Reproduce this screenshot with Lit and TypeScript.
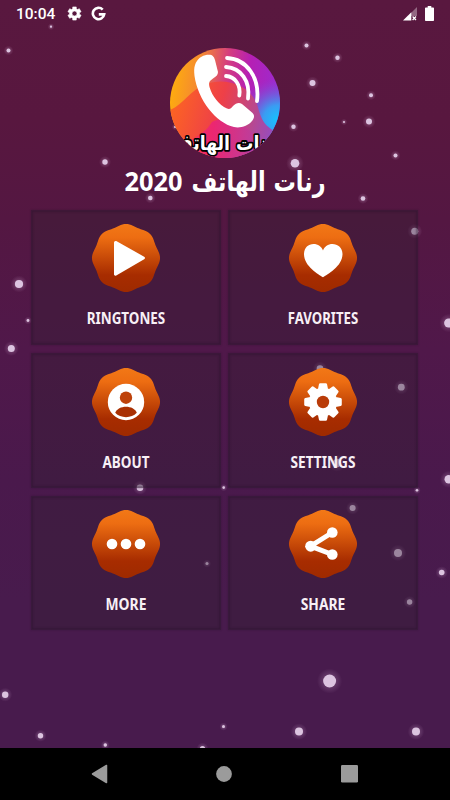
import { LitElement, html, svg, css, type SVGTemplateResult } from "lit";
import { customElement } from "lit/decorators.js";

const LIGHTS: [number, number, number][] = [
  [8.5, 50.5, 2], [51, 26.7, 1.1], [306.5, 45.5, 2], [337.5, 57.7, 2.2], [312.5, 83, 3],
  [371, 95.3, 2], [344, 122, 1], [369, 121.6, 3], [293.5, 126.7, 2.2], [295, 163.3, 4.3],
  [395.5, 155.5, 2], [363, 198.5, 2.3], [175, 127, 1], [150.3, 198, 2.3], [105, 162, 2.7],
  [19, 284, 4.1], [28, 320.5, 1.4], [11.3, 348.5, 3.5], [414.7, 231.3, 3.5], [448.7, 323, 4.6],
  [140, 487.7, 3.3], [223.7, 487.6, 1.3], [320, 368.5, 3.3], [401.3, 387.2, 3.4], [448.7, 479.3, 4.2],
  [417, 490.3, 1.3], [337, 463, 4.2], [207, 563.6, 1.5], [352.6, 508, 3], [398, 552.9, 4],
  [441.7, 572.5, 2.8], [409.6, 602, 2.7], [5.2, 694.7, 3.2], [40.5, 735.7, 2.7], [105.3, 745, 1.7],
  [223.5, 726.6, 1.5], [329.6, 681, 6.5], [299, 731.6, 4], [416, 731.6, 4], [202.5, 748.5, 2.6],
];

/** Soft eight-cornered badge outline centred on the origin. */
const BADGE = (() => {
  const pts: string[] = [];
  for (let d = 0; d < 360; d += 3) {
    const a = (d * Math.PI) / 180;
    const r = 33.1 + 0.95 * Math.cos(8 * a);
    pts.push(`${(r * Math.cos(a)).toFixed(2)} ${(r * Math.sin(a)).toFixed(2)}`);
  }
  return `M${pts.join("L")}Z`;
})();

/** Toothed wheel centred on the origin. */
function gear(outer: number, root: number, teeth: number, tip: number, base: number): string {
  const pts: string[] = [];
  const at = (r: number, deg: number) => {
    const a = ((deg - 90) * Math.PI) / 180;
    pts.push(`${(r * Math.cos(a)).toFixed(2)} ${(r * Math.sin(a)).toFixed(2)}`);
  };
  for (let i = 0; i < teeth; i++) {
    const c = (i * 360) / teeth;
    at(root, c - base);
    at(outer, c - tip);
    at(outer, c + tip);
    at(root, c + base);
  }
  return `M${pts.join("L")}Z`;
}

interface Tile {
  label: string;
  width: number;
  glyph: SVGTemplateResult;
}

const TILES: Tile[] = [
  {
    label: "RINGTONES", width: 78.5,
    glyph: svg`<path d="M-10.500 -15.600L17.400 0L-10.500 16.200Z" fill="#fff" stroke="#fff" stroke-width="3" stroke-linejoin="round"/>`,
  },
  {
    label: "FAVORITES", width: 70.5,
    glyph: svg`<path d="M0 19.200C-4 16.500 -19 8.500 -19 -4C-19 -10.500 -14.500 -14 -9.500 -14C-5 -14 -1.500 -11.500 0 -7.500C1.500 -11.500 5 -14 9.500 -14C14.500 -14 19.500 -10.500 19.500 -4C19.500 8.500 4 16.500 0 19.200Z" fill="#fff"/>`,
  },
  {
    label: "ABOUT", width: 47,
    glyph: svg`<circle r="18.200" fill="#fff"/><circle cy="-4.300" r="6.200" fill="#be420b"/><path d="M-10.800 10.800C-8 2.600 8 2.600 10.800 10.800C5.500 16.600 -5.500 16.600 -10.800 10.800Z" fill="#a93003"/>`,
  },
  {
    label: "SETTINGS", width: 65,
    glyph: svg`<path d="${gear(17.7, 13, 8, 9, 17)}" fill="#fff" stroke="#fff" stroke-width="2.600" stroke-linejoin="round"/><circle r="6.200" fill="#b93c09"/>`,
  },
  {
    label: "MORE", width: 41,
    glyph: svg`<g fill="#fff"><circle cx="-14" r="5.300"/><circle r="5.300"/><circle cx="14" r="5.300"/></g>`,
  },
  {
    label: "SHARE", width: 44.5,
    glyph: svg`<path d="M9.300 -11.500L-12.500 2.200L9.300 10.500" fill="none" stroke="#fff" stroke-width="5"/><g fill="#fff"><circle cx="9.300" cy="-11.500" r="5.300"/><circle cx="-12.300" cy="2.200" r="5.500"/><circle cx="9.300" cy="10.500" r="5.300"/></g>`,
  },
];

@customElement("status-bar")
export class StatusBar extends LitElement {
  static styles = css`
    :host { display: flex; align-items: center; height: 27px; padding: 0 16px; color: #fff; }
    .clock { font: 500 15.500px/27px Roboto, sans-serif; width: 50.500px; padding-top: 1px; }
    .gear { margin-right: 9px; }
    .gap { flex: 1; }
    .signal { margin-right: 8px; }
    svg { display: block; }
  `;
  render() {
    return html`
      <span class="clock">10:04</span>
      <svg class="gear" width="15" height="15" viewBox="-7.5 -7.5 15 15">
        <path fill="#fff" fill-rule="evenodd" stroke="#fff" stroke-width=".6" stroke-linejoin="round"
          d="${gear(6.8, 5, 6, 15, 21)}M2.500 0A2.500 2.500 0 1 0 -2.500 0A2.500 2.500 0 1 0 2.500 0Z"/>
      </svg>
      <svg width="15" height="15" viewBox="-7.5 -7.5 15 15">
        <path d="M4.200 -3.900A5.700 5.700 0 1 0 5.700 .9H.3" fill="none" stroke="#fff" stroke-width="2.600"/>
      </svg>
      <span class="gap"></span>
      <svg class="signal" width="14" height="14" viewBox="0 0 14 14">
        <path d="M14 0V9H8V6Z" fill="#fff" opacity=".35"/>
        <path d="M0 13.500L8.300 5.200V13.500Z" fill="#fff"/>
        <path d="M9.600 9.500L13 13M13 9.500L9.600 13" stroke="#fff" stroke-width="1.300"/>
      </svg>
      <svg width="9" height="15" viewBox="0 0 9 15">
        <path d="M2.700 0H6.300V1.500H8.200Q9 1.500 9 2.300V14.200Q9 15 8.200 15H.8Q0 15 0 14.200V2.300Q0 1.500 .8 1.500H2.700Z" fill="#fff"/>
      </svg>
    `;
  }
}

@customElement("app-logo")
export class AppLogo extends LitElement {
  static styles = css`
    :host { display: block; width: 110px; height: 110px; border-radius: 50%; overflow: hidden; }
    svg { display: block; }
    .name { font: 700 20px "DejaVu Sans", sans-serif; }
  `;
  render() {
    return html`
      <svg width="110" height="110" viewBox="0 0 110 110">
        <defs>
          <linearGradient id="base" x1="0" y1=".25" x2="1" y2=".4">
            <stop offset="0" stop-color="#ffb00a"/>
            <stop offset=".25" stop-color="#f58a30"/>
            <stop offset=".5" stop-color="#d43c80"/>
            <stop offset=".7" stop-color="#b51fb4"/>
            <stop offset="1" stop-color="#9a2cd0"/>
          </linearGradient>
          <radialGradient id="blue" cx="108" cy="72" r="42" gradientUnits="userSpaceOnUse">
            <stop offset="0" stop-color="#14c4ff"/>
            <stop offset=".35" stop-color="#3a9cf2"/>
            <stop offset="1" stop-color="#8a3fd8" stop-opacity="0"/>
          </radialGradient>
          <linearGradient id="wave" x1="0" y1="0" x2="1" y2=".2">
            <stop offset="0" stop-color="#ff6a1c"/>
            <stop offset=".5" stop-color="#ee4048"/>
            <stop offset="1" stop-color="#9a4cb8"/>
          </linearGradient>
          <linearGradient id="pink" x1="0" y1="0" x2="1" y2="0">
            <stop offset="0" stop-color="#fb3a48"/>
            <stop offset=".45" stop-color="#ec2278"/>
            <stop offset="1" stop-color="#b044a8"/>
          </linearGradient>
        </defs>
        <rect width="110" height="110" fill="url(#base)"/>
        <rect width="110" height="110" fill="url(#blue)"/>
        <path d="M0 62C14 56 20 42 36 36C52 30 78 34 87 56C92 74 94 78 110 86V110H0Z" fill="url(#wave)"/>
        <path d="M0 104C16 92 32 90 42 74C56 66 86 74 96 110H0Z" fill="url(#pink)" opacity=".85"/>
        <path d="M25 17C27 11 32 7.500 37 6.800C42 6 44 8 45 12L48 24C48 27 46 28.500 43 30.500C39.500 33 38.500 34 39.500 39C42 48 49 57 57 60.500C59.500 61.500 61 60.500 63 58C66 55 69 54 72 56L82 64.500C85 67 84.500 70 82 73C78 78 70 80.500 64 79C46 75 28 52 24.500 28C24 23 24 20 25 17Z" fill="#fff"/>
        <g fill="none" stroke="#fff" stroke-width="3.800" stroke-linecap="round">
          <path d="M56 28C65 28.500 71 37 69.300 47.500"/>
          <path d="M56 19C71 20 80.500 33 78 50.500"/>
          <path d="M57 10C77 11 90 30 87 53"/>
        </g>
        <text class="name" x="54.500" y="101.500" text-anchor="middle" direction="rtl" textLength="104"
          lengthAdjust="spacingAndGlyphs" fill="#fff" stroke="#000" stroke-width="3.600"
          stroke-linejoin="round" paint-order="stroke">رنات الهاتف</text>
      </svg>
    `;
  }
}

@customElement("menu-tile")
export class MenuTile extends LitElement {
  static properties = { tile: { attribute: false } };
  declare tile: Tile;
  static styles = css`
    :host {
      display: flex; flex-direction: column; align-items: center; box-sizing: border-box;
      padding-top: 12.500px; background: rgba(49, 31, 50, 0.38);
      border: 1px solid rgba(45, 20, 48, 0.35);
      box-shadow: inset 0 0 2px 1px rgba(40, 18, 42, 0.4), 0 0 2px rgba(40, 18, 42, 0.4);
    }
    svg { display: block; flex: none; }
    .label { margin-top: 12px; }
    .text { font: 700 15.500px "Noto Sans", sans-serif; }
  `;
  render() {
    const { label, width, glyph } = this.tile;
    return html`
      <svg width="70" height="70" viewBox="-35 -35 70 70">
        <defs>
          <linearGradient id="g" x1="0" y1="0" x2="0" y2="1">
            <stop offset="0" stop-color="#f27816"/>
            <stop offset=".2" stop-color="#ed6d12"/>
            <stop offset=".75" stop-color="#a72c00"/>
            <stop offset="1" stop-color="#9e2a00"/>
          </linearGradient>
        </defs>
        <path d="${BADGE}" fill="url(#g)"/>
        ${glyph}
      </svg>
      <svg class="label" width="120" height="24" viewBox="0 0 120 24">
        <text class="text" x="60" y="18.500" text-anchor="middle" textLength="${width}"
          lengthAdjust="spacingAndGlyphs" fill="#f8f0f6">${label}</text>
      </svg>
    `;
  }
}

@customElement("app-root")
export class AppRoot extends LitElement {
  static styles = css`
    :host {
      display: flex; flex-direction: column; position: relative; width: 450px; height: 800px;
      overflow: hidden;
      background: linear-gradient(#59183f 0, #58173f 120px, #541742 220px, #50184a 350px, #4a194c 480px, #481b4d 600px, #481b4d 748px);
    }
    .lights { position: absolute; inset: 0; }
    status-bar, app-logo, .title, .grid, .nav { position: relative; }
    app-logo { align-self: center; margin-top: 21px; }
    .title { display: block; align-self: center; margin-top: 5px; overflow: visible; }
    .arabic { font: 700 27px "DejaVu Sans", sans-serif; }
    .year { font: 700 26px "Noto Sans", sans-serif; }
    .grid {
      display: grid; grid-template-columns: 190px 190px; grid-template-rows: 135px 135px 134px;
      gap: 8px 7px; margin: 6.500px auto 0 31px;
    }
    .middle { padding-top: 13px; }
    .last { padding-top: 12px; }
    .nav {
      display: flex; align-items: center; justify-content: space-between; box-sizing: border-box;
      height: 52.500px; margin-top: auto; padding: 0 92px 0 90.500px; background: #000;
    }
    .nav svg { display: block; }
  `;
  render() {
    return html`
      <svg class="lights" width="450" height="800">
        <defs>
          <radialGradient id="halo">
            <stop offset="0" stop-color="#e8c8e8" stop-opacity=".45"/>
            <stop offset=".5" stop-color="#e0b8e0" stop-opacity=".18"/>
            <stop offset="1" stop-color="#e0b8e0" stop-opacity="0"/>
          </radialGradient>
        </defs>
        ${LIGHTS.map(([x, y, r]) => svg`
          <circle cx="${x}" cy="${y}" r="${r * 1.7 + 1.5}" fill="url(#halo)"/>
          <circle cx="${x}" cy="${y}" r="${r}" fill="#dcc4e0"/>`)}
      </svg>
      <status-bar></status-bar>
      <app-logo></app-logo>
      <svg class="title" width="210" height="40" viewBox="120 163 210 40">
        <text class="year" x="124.500" y="191.300" textLength="58" lengthAdjust="spacingAndGlyphs" fill="#fff">2020</text>
        <text class="arabic" x="325.500" y="190.500" direction="rtl" textLength="134" lengthAdjust="spacingAndGlyphs" fill="#fff">رنات الهاتف</text>
      </svg>
      <div class="grid">
        ${TILES.map((t, i) => html`<menu-tile class="${["", "middle", "last"][i >> 1]}" .tile=${t}></menu-tile>`)}
      </div>
      <div class="nav">
        <svg width="17" height="20" viewBox="0 0 17 20"><path d="M15.500 1.500V18.500L1.500 10Z" fill="#9b9b9b" stroke="#9b9b9b" stroke-width="1.500" stroke-linejoin="round"/></svg>
        <svg width="16" height="16" viewBox="0 0 16 16"><circle cx="8" cy="8" r="7.900" fill="#9b9b9b"/></svg>
        <svg width="17" height="18" viewBox="0 0 17 18"><rect width="17" height="17.500" rx="1.200" fill="#9b9b9b"/></svg>
      </div>
    `;
  }
}
